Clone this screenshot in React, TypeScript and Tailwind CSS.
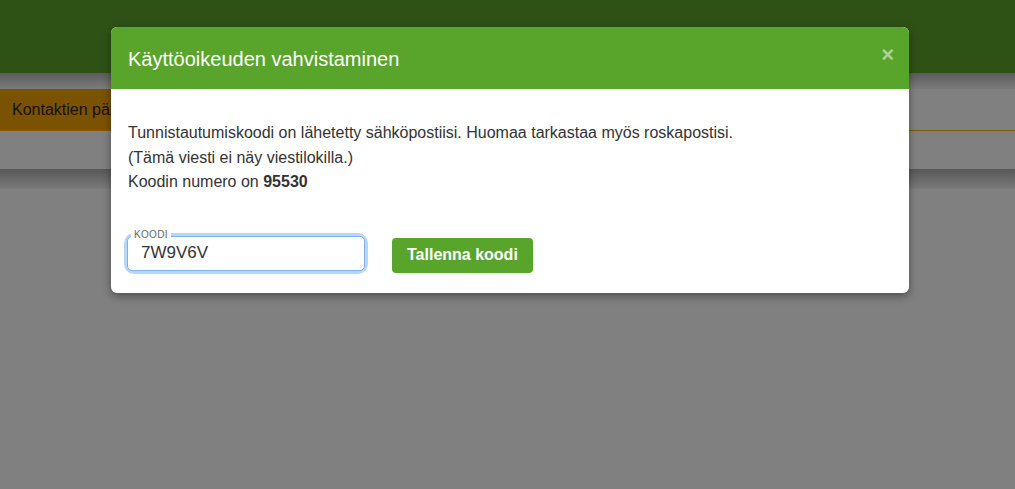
import React from "react";

export default function App() {
  return (
    <div
      className="relative w-[1015px] h-[489px] overflow-hidden bg-[#808080]"
      style={{ fontFamily: '"Liberation Sans", Arial, sans-serif' }}
    >
      {/* dimmed page behind */}
      <div className="flex flex-col">
        <div className="h-[73px] bg-[#2e5216]" />
        <div className="h-[16px] bg-gradient-to-b from-[#5c5c5c] to-[#7c7c7c]" />
        <div className="flex h-[42px] border-b border-[#8a5a00]">
          <div className="w-[150px] bg-[#7b5200] flex items-center pl-[12px] text-[16px] text-[#111] whitespace-nowrap">
            Kontaktien päivitys
          </div>
          <div className="flex-1 bg-[#808080]" />
        </div>
        <div className="h-[38px] bg-[#808080]" />
        <div className="h-[20px] bg-gradient-to-b from-[#585858] to-[#7a7a7a]" />
        <div className="flex-1 bg-[#808080]" />
      </div>

      {/* modal */}
      <div className="absolute left-[111px] top-[27px] w-[798px] rounded-[6px] bg-white overflow-hidden shadow-[0_3px_9px_rgba(0,0,0,0.4)]">
        <div className="h-[62px] bg-[#59a52c] flex items-center justify-between pl-[17px] pr-[17px]">
          <h4 className="text-[20px] text-white leading-none pt-[1px]">Käyttöoikeuden vahvistaminen</h4>
          <span className="text-[22px] font-bold text-white/50 leading-none mt-[-6px] mr-[-2px]">×</span>
        </div>
        <div className="px-[17px] pt-[32px] pb-[20px]">
          <div className="text-[16px] leading-[24.5px] text-[#333]">
            <p>Tunnistautumiskoodi on lähetetty sähköpostiisi. Huomaa tarkastaa myös roskapostisi.</p>
            <p>(Tämä viesti ei näy viestilokilla.)</p>
            <p>
              Koodin numero on <b>95530</b>
            </p>
          </div>
          <div className="flex items-start mt-[41px] gap-[27px]">
            <div className="relative ml-[-1px] rounded-[7px] ring-[3px] ring-[#b8d6fb]">
              <div className="w-[238px] h-[35px] rounded-[5px] border border-[#7fb0f0] flex items-center pl-[13px] text-[17px] text-[#333]">
                7W9V6V
              </div>
              <span className="absolute left-[4px] top-[-7px] bg-white px-[3px] text-[10px] leading-[12px] text-[#666] tracking-[0.3px]">
                KOODI
              </span>
            </div>
            <button className="mt-[2px] h-[35px] px-[15px] rounded-[4px] bg-[#59a52c] text-white font-bold text-[16px]">
              Tallenna koodi
            </button>
          </div>
        </div>
      </div>
    </div>
  );
}
